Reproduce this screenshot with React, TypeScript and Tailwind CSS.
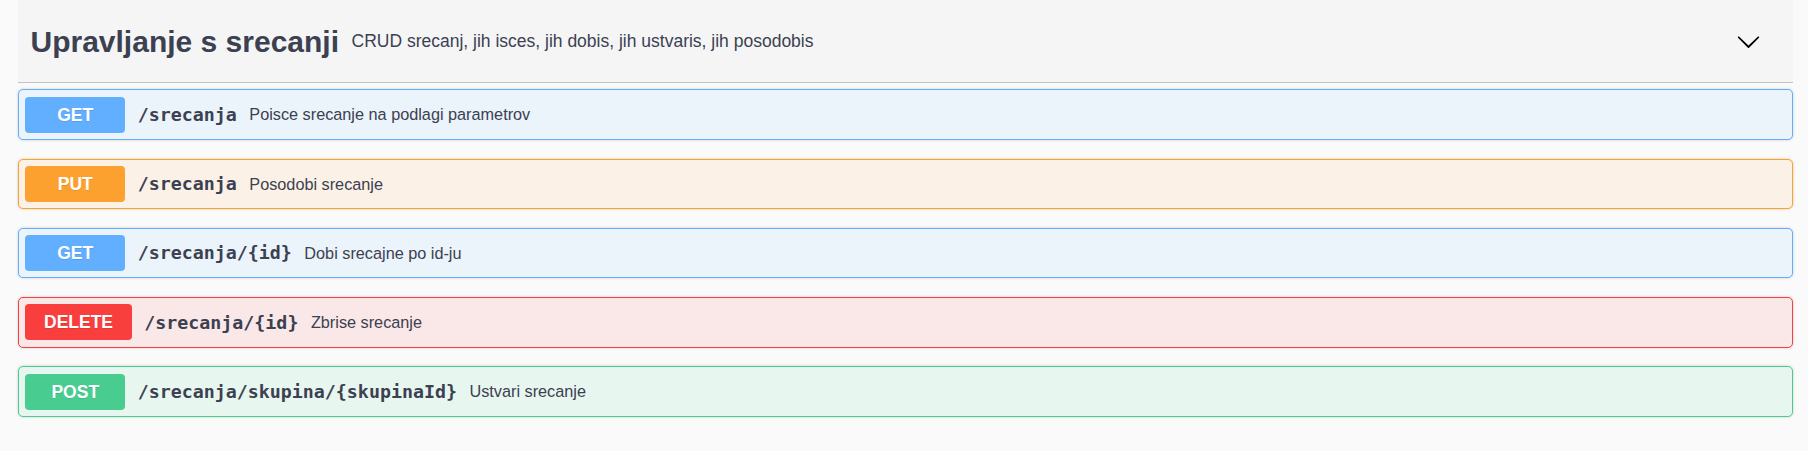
const ops = [
  {
    method: "GET",
    path: "/srecanja",
    summary: "Poisce srecanje na podlagi parametrov",
    block: "border-[#61affe] bg-[#ebf3fb]",
    badge: "bg-[#61affe]",
  },
  {
    method: "PUT",
    path: "/srecanja",
    summary: "Posodobi srecanje",
    block: "border-[#fca130] bg-[#fbf1e6]",
    badge: "bg-[#fca130]",
  },
  {
    method: "GET",
    path: "/srecanja/{id}",
    summary: "Dobi srecajne po id-ju",
    block: "border-[#61affe] bg-[#ebf3fb]",
    badge: "bg-[#61affe]",
  },
  {
    method: "DELETE",
    path: "/srecanja/{id}",
    summary: "Zbrise srecanje",
    block: "border-[#f93e3e] bg-[#fae7e7]",
    badge: "bg-[#f93e3e]",
  },
  {
    method: "POST",
    path: "/srecanja/skupina/{skupinaId}",
    summary: "Ustvari srecanje",
    block: "border-[#49cc90] bg-[#e8f6f0]",
    badge: "bg-[#49cc90]",
  },
];

function Chevron() {
  return (
    <svg viewBox="0 0 20 20" className="h-[25px] w-[25px] fill-black">
      <path d="M17.418 6.109c.272-.268.709-.268.979 0s.271.701 0 .969l-7.908 7.83c-.27.268-.707.268-.979 0l-7.908-7.83c-.27-.268-.27-.701 0-.969.271-.268.709-.268.979 0L10 13.25l7.418-7.141z" />
    </svg>
  );
}

export default function App() {
  return (
    <div className="min-h-[451px] bg-[#fafafa] pl-[18px] pr-[15px] font-['Liberation_Sans',Arial,sans-serif] text-[#3b4151]">
      <div className="flex h-[83px] items-center border-b border-[#c1c2c5] bg-[#f5f5f5] pl-[12.5px] pr-[32px]">
        <h3 className="text-[30px] font-bold">Upravljanje s srecanji</h3>
        <p className="flex-1 px-[12.5px] text-[17.5px]">
          CRUD srecanj, jih isces, jih dobis, jih ustvaris, jih posodobis
        </p>
        <Chevron />
      </div>

      <div className="mt-[6.4px] flex flex-col gap-[18.75px]">
        {ops.map((op, i) => (
          <div
            key={i}
            className={`flex items-center rounded-[5px] border p-[6.25px] shadow-[0_0_3px_rgba(0,0,0,0.19)] ${op.block}`}
          >
            <span
              className={`flex h-[36px] min-w-[100px] items-center justify-center rounded-[4px] px-[18.75px] text-[17.5px] font-bold text-white [text-shadow:0_1px_0_rgba(0,0,0,0.1)] ${op.badge}`}
            >
              {op.method}
            </span>
            <span className="px-[12.5px] font-['DejaVu_Sans_Mono',monospace] text-[18.3px] font-bold">
              {op.path}
            </span>
            <span className="text-[16.25px]">{op.summary}</span>
          </div>
        ))}
      </div>
    </div>
  );
}
